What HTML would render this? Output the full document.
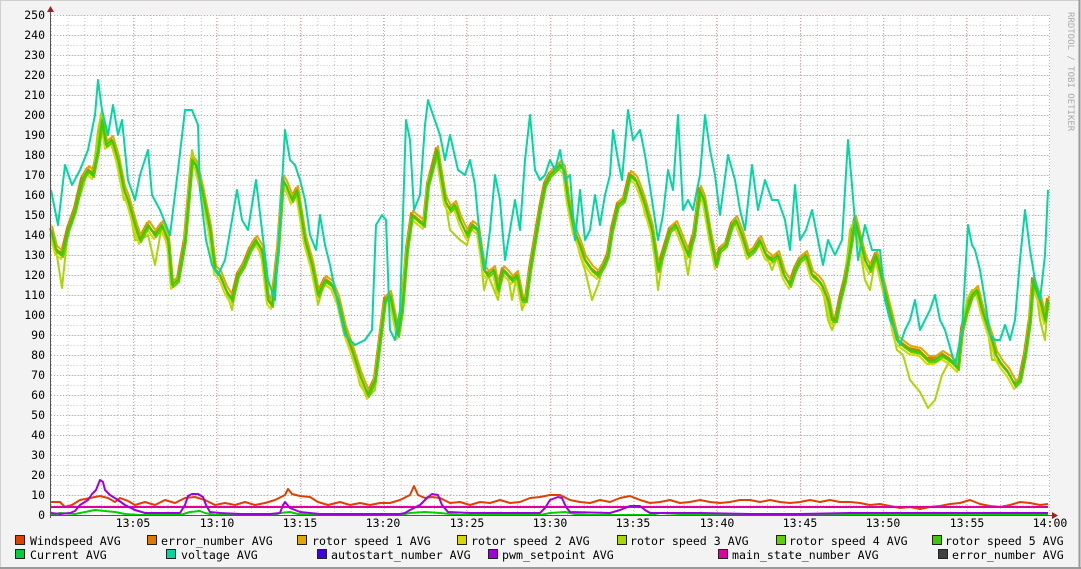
<!DOCTYPE html>
<html><head><meta charset="utf-8"><style>
html,body{margin:0;padding:0;background:#f3f3f3;}
svg{display:block;}
text{font-family:"DejaVu Sans Mono","Liberation Mono",monospace;}
</style></head><body>
<svg width="1081" height="569" viewBox="0 0 1081 569" xmlns="http://www.w3.org/2000/svg">
<defs>
<pattern id="mg" x="51" y="15" width="16.65" height="10" patternUnits="userSpaceOnUse">
<line x1="0.5" y1="0" x2="0.5" y2="10" stroke="#c8c8c8" stroke-width="1" stroke-dasharray="1,2"/>
<line x1="0" y1="0.5" x2="16.65" y2="0.5" stroke="#c8c8c8" stroke-width="1" stroke-dasharray="1,2"/>
</pattern>
<path id="rot" d="M51,230 L56,250 62,255 68,230 75,210 82,180 88,170 93,175 98,150 102,120 106,145 112,140 118,160 124,190 128,200 135,225 140,240 148,225 155,235 162,225 168,240 172,285 178,280 185,240 192,160 196,165 202,190 210,230 215,270 220,275 226,290 232,300 238,275 244,265 250,250 256,240 262,250 268,300 272,305 278,250 283,180 286,185 292,200 297,190 305,240 312,265 318,295 325,280 332,285 338,300 345,330 352,350 360,375 368,395 375,380 380,340 385,300 390,295 395,320 398,335 402,310 407,250 412,215 418,220 424,225 428,185 432,170 437,150 440,170 445,200 450,210 455,205 460,220 467,235 472,225 478,230 484,270 488,275 494,270 498,290 503,270 508,275 512,280 517,275 522,300 526,300 530,270 535,240 540,210 545,185 550,175 555,170 560,165 564,170 568,200 574,230 580,245 585,260 592,270 598,275 604,265 608,255 612,230 618,205 624,200 630,175 636,180 640,190 645,205 652,230 658,270 664,250 670,230 676,225 682,240 688,255 694,235 700,190 704,200 710,235 716,265 720,250 726,245 732,225 736,220 742,235 748,255 754,250 760,240 766,255 772,260 778,255 784,275 790,285 795,270 800,260 806,255 812,275 818,280 822,285 828,300 832,320 836,320 840,300 845,280 850,250 855,220 860,240 865,260 870,270 876,255 882,280 887,300 892,320 897,340 903,345 910,350 920,352 928,360 935,360 942,355 950,360 958,368 962,330 967,310 972,295 977,290 982,310 987,325 992,340 996,355 1002,365 1008,372 1015,385 1020,380 1025,355 1030,320 1033,280 1036,290 1040,300 1045,320 1048,300"/>
</defs>
<rect x="0" y="0" width="1081" height="569" fill="#f3f3f3"/>
<rect x="0.5" y="0.5" width="1079" height="567" fill="none" stroke="#cfcfcf"/>
<line x1="1079.5" y1="0" x2="1079.5" y2="569" stroke="#9a9a9a" stroke-width="2"/>
<line x1="0" y1="568" x2="1081" y2="568" stroke="#9a9a9a" stroke-width="2"/>
<rect x="51" y="15" width="999" height="500" fill="#fff"/>
<rect x="51" y="15" width="999" height="500" fill="url(#mg)"/>
<g stroke="#e8a0a0" stroke-width="1" stroke-dasharray="1,2">
<line x1="51" y1="15.5" x2="1050" y2="15.5"/><line x1="51" y1="35.5" x2="1050" y2="35.5"/><line x1="51" y1="55.5" x2="1050" y2="55.5"/><line x1="51" y1="75.5" x2="1050" y2="75.5"/><line x1="51" y1="95.5" x2="1050" y2="95.5"/><line x1="51" y1="115.5" x2="1050" y2="115.5"/><line x1="51" y1="135.5" x2="1050" y2="135.5"/><line x1="51" y1="155.5" x2="1050" y2="155.5"/><line x1="51" y1="175.5" x2="1050" y2="175.5"/><line x1="51" y1="195.5" x2="1050" y2="195.5"/><line x1="51" y1="215.5" x2="1050" y2="215.5"/><line x1="51" y1="235.5" x2="1050" y2="235.5"/><line x1="51" y1="255.5" x2="1050" y2="255.5"/><line x1="51" y1="275.5" x2="1050" y2="275.5"/><line x1="51" y1="295.5" x2="1050" y2="295.5"/><line x1="51" y1="315.5" x2="1050" y2="315.5"/><line x1="51" y1="335.5" x2="1050" y2="335.5"/><line x1="51" y1="355.5" x2="1050" y2="355.5"/><line x1="51" y1="375.5" x2="1050" y2="375.5"/><line x1="51" y1="395.5" x2="1050" y2="395.5"/><line x1="51" y1="415.5" x2="1050" y2="415.5"/><line x1="51" y1="435.5" x2="1050" y2="435.5"/><line x1="51" y1="455.5" x2="1050" y2="455.5"/><line x1="51" y1="475.5" x2="1050" y2="475.5"/><line x1="51" y1="495.5" x2="1050" y2="495.5"/>
<line x1="133.5" y1="15" x2="133.5" y2="515"/><line x1="216.5" y1="15" x2="216.5" y2="515"/><line x1="300.5" y1="15" x2="300.5" y2="515"/><line x1="383.5" y1="15" x2="383.5" y2="515"/><line x1="466.5" y1="15" x2="466.5" y2="515"/><line x1="550.5" y1="15" x2="550.5" y2="515"/><line x1="633.5" y1="15" x2="633.5" y2="515"/><line x1="716.5" y1="15" x2="716.5" y2="515"/><line x1="800.5" y1="15" x2="800.5" y2="515"/><line x1="883.5" y1="15" x2="883.5" y2="515"/><line x1="966.5" y1="15" x2="966.5" y2="515"/><line x1="1049.5" y1="15" x2="1049.5" y2="515"/>
</g>
<g font-size="11.5" fill="#000" text-anchor="end">
<text x="45" y="19">250</text><text x="45" y="39">240</text><text x="45" y="59">230</text><text x="45" y="79">220</text><text x="45" y="99">210</text><text x="45" y="119">200</text><text x="45" y="139">190</text><text x="45" y="159">180</text><text x="45" y="179">170</text><text x="45" y="199">160</text><text x="45" y="219">150</text><text x="45" y="239">140</text><text x="45" y="259">130</text><text x="45" y="279">120</text><text x="45" y="299">110</text><text x="45" y="319">100</text><text x="45" y="339">90</text><text x="45" y="359">80</text><text x="45" y="379">70</text><text x="45" y="399">60</text><text x="45" y="419">50</text><text x="45" y="439">40</text><text x="45" y="459">30</text><text x="45" y="479">20</text><text x="45" y="499">10</text><text x="45" y="519">0</text>
</g>
<g font-size="11.5" fill="#000" text-anchor="middle">
<text x="133" y="527">13:05</text><text x="217" y="527">13:10</text><text x="300" y="527">13:15</text><text x="383" y="527">13:20</text><text x="467" y="527">13:25</text><text x="550" y="527">13:30</text><text x="633" y="527">13:35</text><text x="717" y="527">13:40</text><text x="800" y="527">13:45</text><text x="883" y="527">13:50</text><text x="967" y="527">13:55</text><text x="1050" y="527">14:00</text>
</g>
<text x="1068" y="12" font-size="9" fill="#aaa" transform="rotate(90 1068 12)">RRDTOOL / TOBI OETIKER</text>

<g fill="none" stroke-width="2" stroke-linejoin="round">
<use href="#rot" stroke="#e07800" transform="translate(-1,-2)"/>
<use href="#rot" stroke="#e0a800" transform="translate(1,-4)"/>
<path d="M51,230 L56,250 62,288 68,230 75,210 82,190 88,170 93,175 98,130 102,110 106,145 112,140 118,170 124,200 128,200 135,240 140,240 148,235 155,265 162,225 168,250 172,285 178,280 185,240 192,150 196,165 202,190 210,240 215,270 220,275 226,290 232,310 238,275 244,265 250,250 256,240 262,260 268,300 272,305 278,250 283,180 286,185 292,200 297,190 305,240 312,265 318,305 325,280 332,285 338,300 345,330 352,350 360,385 368,397 375,390 380,340 385,300 390,295 395,320 398,335 402,310 407,250 412,215 418,220 424,225 428,180 432,170 437,150 440,170 445,200 450,230 455,235 460,240 467,245 472,225 478,230 484,290 488,275 494,290 498,300 503,270 508,275 512,300 517,275 522,310 526,300 530,270 535,240 540,210 545,185 550,175 555,170 560,165 564,170 568,200 574,230 580,255 585,270 592,300 598,285 604,265 608,255 612,230 618,205 624,200 630,175 636,180 640,190 645,215 652,230 658,290 664,250 670,230 676,225 682,240 688,275 694,235 700,190 704,200 710,235 716,265 720,250 726,245 732,225 736,220 742,235 748,255 754,250 760,240 766,255 772,270 778,255 784,275 790,285 795,270 800,260 806,255 812,275 818,280 822,285 828,320 832,330 836,320 840,300 845,280 850,230 855,220 860,250 865,280 870,290 876,255 882,280 887,300 892,330 897,350 903,355 910,380 920,392 928,408 935,400 942,375 950,360 958,368 962,330 967,300 972,290 977,290 982,310 987,325 992,360 996,360 1002,365 1008,372 1015,385 1020,380 1025,355 1030,320 1033,280 1036,290 1040,320 1045,340 1048,300" stroke="#a8d800"/>
<use href="#rot" stroke="#d8d800" transform="translate(-1,4)"/>
<use href="#rot" stroke="#60d000" transform="translate(1,2)"/>
<use href="#rot" stroke="#40c800"/>
<path d="M51,190 L58,225 65,165 72,185 80,170 88,150 95,115 98,80 102,110 108,135 113,105 118,135 122,120 128,180 135,200 140,175 148,150 152,195 160,210 170,235 178,170 185,110 192,110 198,125 200,190 206,240 212,265 218,275 225,260 232,220 237,190 242,220 248,230 256,180 262,230 268,280 275,300 280,220 285,130 290,160 295,165 300,180 305,200 310,235 316,250 320,215 325,245 330,265 335,290 345,335 355,345 365,340 372,330 376,225 382,215 386,220 390,330 395,340 400,310 403,215 406,120 410,140 414,210 420,195 425,125 428,100 433,115 440,135 445,160 450,135 458,170 465,175 470,160 475,185 480,240 485,270 490,230 495,175 500,200 505,260 510,230 515,200 520,230 525,160 530,115 535,170 540,180 545,175 550,160 555,170 560,150 565,180 570,175 575,240 580,190 585,240 590,230 595,195 600,225 605,195 610,175 613,130 618,160 622,180 628,110 633,140 640,130 645,155 652,200 658,240 663,215 668,170 673,190 678,115 683,210 688,200 693,210 700,175 705,115 710,150 715,175 720,215 728,155 735,180 740,210 745,230 752,165 758,210 765,180 772,200 778,200 785,220 790,250 795,185 800,240 806,230 812,210 818,240 823,265 828,240 835,255 842,240 848,140 852,185 858,260 865,225 872,250 880,250 885,300 890,320 895,330 900,345 905,330 910,320 915,300 920,330 925,320 930,310 935,295 940,320 945,330 955,365 962,330 968,225 972,245 975,250 980,270 985,300 990,335 995,340 1000,340 1005,325 1010,340 1015,320 1020,260 1025,210 1030,250 1035,280 1040,300 1045,255 1048,190" stroke="#00d8a0"/>
<path d="M51,502 L60,502 65,507 72,505 80,500 90,498 100,496 108,498 115,502 120,498 128,501 135,505 145,502 155,505 165,500 175,503 185,498 195,497 205,500 215,505 225,503 235,505 245,502 255,505 265,503 275,500 285,495 288,489 292,494 300,496 310,497 318,502 328,505 340,502 350,505 360,503 370,505 380,503 390,503 400,500 410,495 414,486 418,495 425,498 432,497 440,498 450,503 460,502 470,505 480,502 490,503 500,500 510,503 520,502 530,498 540,497 550,495 560,495 570,500 580,502 590,503 600,500 610,502 620,498 630,496 640,500 650,503 660,502 670,500 680,503 690,502 700,500 710,502 720,503 730,502 740,500 750,500 760,502 770,500 780,502 790,503 800,502 810,500 820,502 830,500 840,502 850,502 860,503 870,505 880,504 890,506 900,508 910,507 920,509 930,507 940,506 950,504 960,503 970,500 980,504 990,506 1000,507 1010,505 1020,502 1030,503 1040,505 1048,504" stroke="#e04000"/>
<path d="M51,507 L1048,507" stroke="#e000a0"/>
<path d="M51,515 L60,513 75,514 85,512 95,510 105,511 115,512 125,514 140,515 180,515 190,512 200,511 205,513 215,515 275,515 280,513 290,512 298,514 310,515 400,515 410,513 425,512 440,513 460,515 540,515 550,513 565,512 575,514 590,515 650,515 660,513 680,514 700,515 1048,515" stroke="#00d000"/>
<path d="M51,513 L60,514 70,513 75,511 80,505 88,500 92,494 96,490 100,480 103,482 105,490 110,495 118,500 125,505 135,510 145,513 180,513 185,505 188,496 192,494 198,494 203,497 206,505 210,512 220,513 240,514 270,514 280,513 283,505 285,502 290,508 300,512 320,514 400,514 405,513 410,510 420,505 428,497 432,494 438,495 442,505 448,512 470,513 540,513 545,508 550,500 558,497 562,498 566,507 570,512 610,513 620,510 630,506 640,506 645,510 650,513 700,513 750,514 800,514 850,513 1048,513" stroke="#a000e0"/>
</g>
<line x1="51" y1="515.5" x2="1056" y2="515.5" stroke="#555" stroke-width="1"/>
<line x1="50.5" y1="10" x2="50.5" y2="518" stroke="#555" stroke-width="1"/>
<polygon points="47,12 54,12 50.5,6" fill="#a02020"/>
<polygon points="1052,512 1052,519 1058,515.5" fill="#a02020"/>

<g stroke="#222" stroke-width="1">
<rect x="15.5" y="535.5" width="9" height="9" fill="#e04000"/>
<rect x="147.5" y="535.5" width="9" height="9" fill="#e07800"/>
<rect x="297.5" y="535.5" width="9" height="9" fill="#e0a800"/>
<rect x="457.5" y="535.5" width="9" height="9" fill="#d8d800"/>
<rect x="617.5" y="535.5" width="9" height="9" fill="#a8d800"/>
<rect x="776.5" y="535.5" width="9" height="9" fill="#60d000"/>
<rect x="932.5" y="535.5" width="9" height="9" fill="#40c800"/>
<rect x="15.5" y="549.5" width="9" height="9" fill="#00d040"/>
<rect x="166.5" y="549.5" width="9" height="9" fill="#00d8a0"/>
<rect x="317.5" y="549.5" width="9" height="9" fill="#4000e0"/>
<rect x="488.5" y="549.5" width="9" height="9" fill="#a000e0"/>
<rect x="718.5" y="549.5" width="9" height="9" fill="#e000a0"/>
<rect x="938.5" y="549.5" width="9" height="9" fill="#404040"/>
</g>
<g font-size="11.6" fill="#000">
<text x="30" y="545">Windspeed AVG</text>
<text x="161" y="545">error_number AVG</text>
<text x="312" y="545">rotor speed 1 AVG</text>
<text x="471" y="545">rotor speed 2 AVG</text>
<text x="630" y="545">rotor speed 3 AVG</text>
<text x="789" y="545">rotor speed 4 AVG</text>
<text x="945" y="545">rotor speed 5 AVG</text>
<text x="30" y="559">Current AVG</text>
<text x="181" y="559">voltage AVG</text>
<text x="331" y="559">autostart_number AVG</text>
<text x="502" y="559">pwm_setpoint AVG</text>
<text x="732" y="559">main_state_number AVG</text>
<text x="952" y="559">error_number AVG</text>
</g>
</svg>
</body></html>
